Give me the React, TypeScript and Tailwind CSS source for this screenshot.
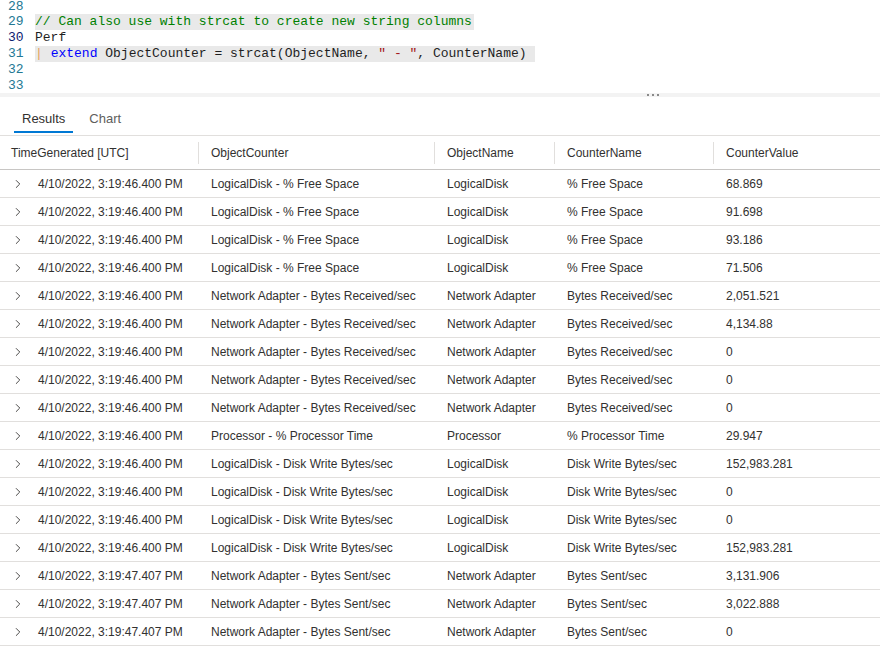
import { ChevronRight } from 'lucide-react';

type Row = {
  time: string;
  objectCounter: string;
  objectName: string;
  counterName: string;
  counterValue: string;
};

const T1 = '4/10/2022, 3:19:46.400 PM';
const T2 = '4/10/2022, 3:19:47.407 PM';

const mk = (time: string, objectName: string, counterName: string, counterValue: string): Row => ({
  time,
  objectCounter: `${objectName} - ${counterName}`,
  objectName,
  counterName,
  counterValue,
});

const rows: Row[] = [
  mk(T1, 'LogicalDisk', '% Free Space', '68.869'),
  mk(T1, 'LogicalDisk', '% Free Space', '91.698'),
  mk(T1, 'LogicalDisk', '% Free Space', '93.186'),
  mk(T1, 'LogicalDisk', '% Free Space', '71.506'),
  mk(T1, 'Network Adapter', 'Bytes Received/sec', '2,051.521'),
  mk(T1, 'Network Adapter', 'Bytes Received/sec', '4,134.88'),
  mk(T1, 'Network Adapter', 'Bytes Received/sec', '0'),
  mk(T1, 'Network Adapter', 'Bytes Received/sec', '0'),
  mk(T1, 'Network Adapter', 'Bytes Received/sec', '0'),
  mk(T1, 'Processor', '% Processor Time', '29.947'),
  mk(T1, 'LogicalDisk', 'Disk Write Bytes/sec', '152,983.281'),
  mk(T1, 'LogicalDisk', 'Disk Write Bytes/sec', '0'),
  mk(T1, 'LogicalDisk', 'Disk Write Bytes/sec', '0'),
  mk(T1, 'LogicalDisk', 'Disk Write Bytes/sec', '152,983.281'),
  mk(T2, 'Network Adapter', 'Bytes Sent/sec', '3,131.906'),
  mk(T2, 'Network Adapter', 'Bytes Sent/sec', '3,022.888'),
  mk(T2, 'Network Adapter', 'Bytes Sent/sec', '0'),
];

const Editor = () => {
  return (
    <div className="h-[93px] overflow-hidden font-['Liberation_Mono',monospace] text-[13px] leading-4">
      {/* 편집기 상단 28번 줄 */}
      <div className="flex h-[14px]">
        <span className="w-[35px] pl-2 leading-[14px] text-[#237893]">28</span>
      </div>
      <div className="flex">
        <span className="w-[35px] pl-2 text-[#237893]">29</span>
        <span className="bg-[#e9e9e9] pr-0.5 text-[#008000]">// Can also use with strcat to create new string columns</span>
      </div>
      <div className="flex">
        <span className="w-[35px] pl-2 text-[#0b216f]">30</span>
        <span className="text-[#1f1f1f]">Perf</span>
      </div>
      <div className="flex">
        <span className="w-[35px] pl-2 text-[#237893]">31</span>
        <span className="bg-[#e9e9e9] pr-2 text-[#1f1f1f]">
          <span className="text-[#e8a25a]">|</span> <span className="text-[#0000ff]">extend</span> ObjectCounter = strcat(ObjectName,{' '}
          <span className="text-[#a31515]">" - "</span>, CounterName)
        </span>
      </div>
      <div className="flex">
        <span className="w-[35px] pl-2 text-[#237893]">32</span>
      </div>
      <div className="flex">
        <span className="w-[35px] pl-2 text-[#237893]">33</span>
      </div>
    </div>
  );
};

const Splitter = () => (
  <div className="flex h-1 items-center justify-center bg-[#f3f3f3]">
    <div className="ml-[425px] flex gap-[3px]">
      <span className="h-[2px] w-[2px] bg-[#8a8a8a]" />
      <span className="h-[2px] w-[2px] bg-[#8a8a8a]" />
      <span className="h-[2px] w-[2px] bg-[#8a8a8a]" />
    </div>
  </div>
);

const Tabs = () => (
  <div className="flex h-[39px] items-start border-b border-[#e1dfdd] pl-[14px] text-[13px] leading-5">
    <div className="flex flex-col">
      <span className="px-2 pt-3 text-[#323130]">Results</span>
      <span className="mt-[2px] h-[2px] w-full bg-[#0078d4]" />
    </div>
    <div className="ml-2 flex flex-col">
      <span className="px-2 pt-3 text-[#605e5c]">Chart</span>
    </div>
  </div>
);

const HeaderCell = ({ label, w, sep = true }: { label: string; w: string; sep?: boolean }) => (
  <div className={`flex h-full items-center ${w}`}>
    {sep && <span className="h-[22px] w-px bg-[#e1dfdd]" />}
    <span className={sep ? 'pl-3' : 'pl-[11px]'}>{label}</span>
  </div>
);

export default function App() {
  return (
    <div className="h-[652px] w-[880px] overflow-hidden bg-white font-['Liberation_Sans',sans-serif] text-[#323130]">
      <Editor />
      <Splitter />
      <Tabs />
      <div className="text-[12px]">
        <div className="flex h-[34px] items-center border-b border-[#c8c6c4] pt-px">
          <HeaderCell label="TimeGenerated [UTC]" w="w-[198px]" sep={false} />
          <HeaderCell label="ObjectCounter" w="w-[236px]" />
          <HeaderCell label="ObjectName" w="w-[120px]" />
          <HeaderCell label="CounterName" w="w-[159px]" />
          <HeaderCell label="CounterValue" w="flex-1" />
        </div>
        {rows.map((r, i) => (
          <div key={i} className="flex h-[28px] items-center border-b border-[#e1dfdd]">
            <div className="flex w-[198px] items-center">
              <ChevronRight className="ml-[11px] h-[14px] w-[14px] text-[#323130]" strokeWidth={1.5} />
              <span className="pl-[13px]">{r.time}</span>
            </div>
            <div className="w-[236px] pl-[13px]">{r.objectCounter}</div>
            <div className="w-[120px] pl-[13px]">{r.objectName}</div>
            <div className="w-[159px] pl-[13px]">{r.counterName}</div>
            <div className="flex-1 pl-[13px]">{r.counterValue}</div>
          </div>
        ))}
      </div>
    </div>
  );
}
